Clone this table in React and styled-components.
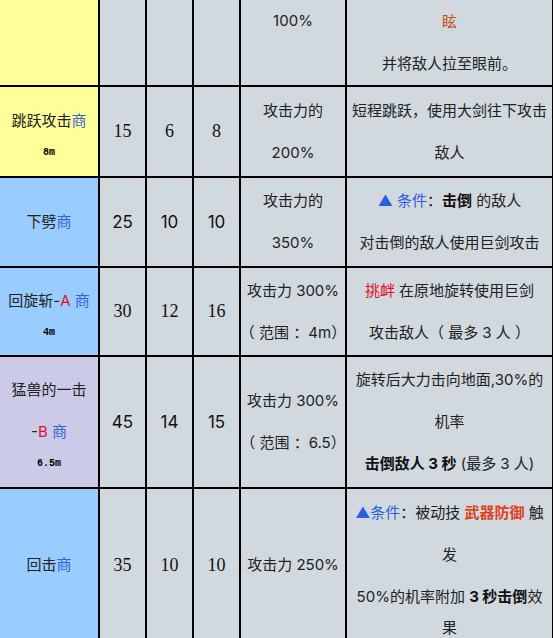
import React from "react";
import styled, { createGlobalStyle } from "styled-components";

const GlobalStyle = createGlobalStyle`
  html, body {
    margin: 0;
    padding: 0;
    overflow: hidden;
    background: #d1d8de;
  }
`;

const Table = styled.div`
  display: grid;
  grid-template-columns: 98px 45px 45px 45px 104px 205px;
  grid-template-rows: 85px 89px 88px 87px 130px 152px;
  gap: 2px;
  width: max-content;
  padding: 0 2px 2px 0;
  background: #000;
  font-family: Inter, "Noto Sans CJK SC", sans-serif;
  font-size: 15px;
  color: #222;
`;

const Cell = styled.div`
  background: ${(p) => p.$bg || "#d1d8de"};
  display: flex;
  flex-direction: column;
  align-items: center;
  justify-content: ${(p) => (p.$top ? "flex-start" : "center")};
  white-space: nowrap;
  overflow: hidden;
`;

const Line = styled.div`
  height: ${(p) => p.$h || 42}px;
  line-height: ${(p) => p.$h || 42}px;
  text-align: center;
`;

const Range = styled.div`
  height: 22px;
  line-height: 22px;
  font-family: "Liberation Mono", "DejaVu Sans Mono", monospace;
  font-weight: bold;
  font-size: 10px;
  color: #000;
`;

const Num = styled.div`
  font-family: ${(p) =>
    p.$serif ? '"Liberation Serif", serif' : "Inter, sans-serif"};
  font-size: ${(p) => (p.$serif ? 18 : 17)}px;
  color: #111;
`;

const Shop = styled.span`
  color: #3264d8;
`;

const Red = styled.span`
  color: #e0102e;
`;

const Stun = styled.span`
  color: #c0501a;
`;

const Cond = styled.span`
  color: #2b5fe0;
`;

const Bold = styled.span`
  font-weight: bold;
  color: #111;
`;

const Weapon = styled.span`
  font-weight: bold;
  color: #e04020;
`;

const YELLOW = "#ffff99";
const BLUE = "#99ccff";
const LAVENDER = "#cbcbe8";

const NumCells = ({ values, serif }) =>
  values.map((v, i) => (
    <Cell key={i}>
      <Num $serif={serif}>{v}</Num>
    </Cell>
  ));

const App = () => {
  return (
    <>
      <GlobalStyle />
      <Table>
        {/* row 1 (cut off at the top) */}
        <Cell $bg={YELLOW} />
        <Cell />
        <Cell />
        <Cell />
        <Cell $top>
          <Line>100%</Line>
        </Cell>
        <Cell>
          <Line>
            <Stun>眩</Stun>
          </Line>
          <Line>并将敌人拉至眼前。</Line>
        </Cell>

        {/* row 2 */}
        <Cell $bg={YELLOW}>
          <Line>
            跳跃攻击<Shop>商</Shop>
          </Line>
          <Range>8m</Range>
        </Cell>
        <NumCells values={["15", "6", "8"]} serif />
        <Cell>
          <Line>攻击力的</Line>
          <Line>200%</Line>
        </Cell>
        <Cell>
          <Line>短程跳跃，使用大剑往下攻击</Line>
          <Line>敌人</Line>
        </Cell>

        {/* row 3 */}
        <Cell $bg={BLUE}>
          <Line>
            下劈<Shop>商</Shop>
          </Line>
        </Cell>
        <NumCells values={["25", "10", "10"]} />
        <Cell>
          <Line>攻击力的</Line>
          <Line>350%</Line>
        </Cell>
        <Cell>
          <Line>
            <Cond>▲ 条件</Cond>：<Bold>击倒</Bold> 的敌人
          </Line>
          <Line>对击倒的敌人使用巨剑攻击</Line>
        </Cell>

        {/* row 4 */}
        <Cell $bg={BLUE}>
          <Line>
            回旋斩-<Red>A</Red> <Shop>商</Shop>
          </Line>
          <Range>4m</Range>
        </Cell>
        <NumCells values={["30", "12", "16"]} serif />
        <Cell>
          <Line>攻击力 300%</Line>
          <Line>（ 范围 ：4m）</Line>
        </Cell>
        <Cell>
          <Line>
            <Red>挑衅</Red> 在原地旋转使用巨剑
          </Line>
          <Line>攻击敌人（ 最多 3 人 ）</Line>
        </Cell>

        {/* row 5 */}
        <Cell $bg={LAVENDER}>
          <Line>猛兽的一击</Line>
          <Line>
            -<Red>B</Red> <Shop>商</Shop>
          </Line>
          <Range>6.5m</Range>
        </Cell>
        <NumCells values={["45", "14", "15"]} />
        <Cell>
          <Line>攻击力 300%</Line>
          <Line>（ 范围 ：6.5）</Line>
        </Cell>
        <Cell>
          <Line>旋转后大力击向地面,30%的</Line>
          <Line>机率</Line>
          <Line>
            <Bold>击倒敌人 3 秒</Bold> (最多 3 人)
          </Line>
        </Cell>

        {/* row 6 */}
        <Cell $bg={BLUE}>
          <Line>
            回击<Shop>商</Shop>
          </Line>
        </Cell>
        <NumCells values={["35", "10", "10"]} serif />
        <Cell>
          <Line>攻击力 250%</Line>
        </Cell>
        <Cell>
          <Line>
            <Cond>▲条件</Cond>：被动技 <Weapon>武器防御</Weapon> 触
          </Line>
          <Line>发</Line>
          <Line>
            50%的机率附加 <Bold>3 秒击倒</Bold>效
          </Line>
          <Line $h={20}>果</Line>
        </Cell>
      </Table>
    </>
  );
};

export default App;
